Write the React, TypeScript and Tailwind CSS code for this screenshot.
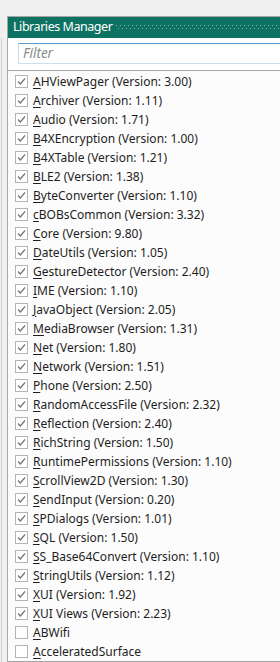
const libraries: { name: string; version?: string; checked: boolean }[] = [
  { name: "AHViewPager", version: "3.00", checked: true },
  { name: "Archiver", version: "1.11", checked: true },
  { name: "Audio", version: "1.71", checked: true },
  { name: "B4XEncryption", version: "1.00", checked: true },
  { name: "B4XTable", version: "1.21", checked: true },
  { name: "BLE2", version: "1.38", checked: true },
  { name: "ByteConverter", version: "1.10", checked: true },
  { name: "cBOBsCommon", version: "3.32", checked: true },
  { name: "Core", version: "9.80", checked: true },
  { name: "DateUtils", version: "1.05", checked: true },
  { name: "GestureDetector", version: "2.40", checked: true },
  { name: "IME", version: "1.10", checked: true },
  { name: "JavaObject", version: "2.05", checked: true },
  { name: "MediaBrowser", version: "1.31", checked: true },
  { name: "Net", version: "1.80", checked: true },
  { name: "Network", version: "1.51", checked: true },
  { name: "Phone", version: "2.50", checked: true },
  { name: "RandomAccessFile", version: "2.32", checked: true },
  { name: "Reflection", version: "2.40", checked: true },
  { name: "RichString", version: "1.50", checked: true },
  { name: "RuntimePermissions", version: "1.10", checked: true },
  { name: "ScrollView2D", version: "1.30", checked: true },
  { name: "SendInput", version: "0.20", checked: true },
  { name: "SPDialogs", version: "1.01", checked: true },
  { name: "SQL", version: "1.50", checked: true },
  { name: "SS_Base64Convert", version: "1.10", checked: true },
  { name: "StringUtils", version: "1.12", checked: true },
  { name: "XUI", version: "1.92", checked: true },
  { name: "XUI Views", version: "2.23", checked: true },
  { name: "ABWifi", checked: false },
  { name: "AcceleratedSurface", checked: false },
];

function CheckBox({ checked }: { checked: boolean }) {
  return (
    <span className="flex h-[13px] w-[13px] shrink-0 items-center justify-center border border-[#b4b4b4] bg-white">
      {checked && (
        <svg width="11" height="11" viewBox="0 0 11 11" aria-hidden="true">
          <polyline points="2,5.5 4.3,8 9,2.5" fill="none" stroke="#737373" strokeWidth="1.2" />
        </svg>
      )}
    </span>
  );
}

function Grip() {
  return (
    <svg className="ml-[4px] h-[6px] flex-1" aria-hidden="true">
      <defs>
        <pattern id="grip" width="4" height="6" patternUnits="userSpaceOnUse">
          <rect x="0" y="0" width="1" height="1" fill="#79b2a7" />
          <rect x="2" y="3" width="1" height="1" fill="#79b2a7" />
        </pattern>
      </defs>
      <rect width="100%" height="100%" fill="url(#grip)" />
    </svg>
  );
}

export default function App() {
  return (
    <div className="flex h-[662px] w-[280px] overflow-hidden bg-[#f0f0f0] font-['Noto_Sans',sans-serif]">
      <div className="w-[7px] shrink-0 pt-[38px]">
        <div className="ml-[1px] h-full w-px bg-[#d2d2d2]" />
      </div>

      <div className="mt-[16px] flex min-w-0 flex-1 flex-col border-l border-t border-b border-[#a6a6a6]">
        {/* Title bar */}
        <div className="flex h-[21px] shrink-0 items-center bg-[#0d7261] pl-[5px]">
          <span className="whitespace-nowrap text-[12.5px] tracking-[-0.45px] text-white">Libraries Manager</span>
          <Grip />
        </div>

        {/* Filter */}
        <div className="shrink-0 bg-white pb-[6px] pl-[10px] pt-[5px]">
          <div className="flex h-[21px] items-center border border-l-[#c5dbeb] border-t-[#5f9ed3] border-b-[#c7e0f1] border-r-0 pl-[4px]">
            <span className="text-[13.5px] italic text-[#8a8a8a]">Filter</span>
          </div>
        </div>

        {/* List */}
        <div className="flex-1 border-t border-[#a6a6a6] bg-[#fcfcfc] pt-[1px]">
          {libraries.map((lib) => (
            <div key={lib.name} className="flex h-[19px] items-center pl-[7px]">
              <CheckBox checked={lib.checked} />
              <span className="ml-[5px] whitespace-nowrap text-[12px] text-[#1e1e1e]">
                <span className="underline underline-offset-2">{lib.name[0]}</span>
                {lib.name.slice(1)}
                {lib.version && ` (Version: ${lib.version})`}
              </span>
            </div>
          ))}
        </div>
      </div>
    </div>
  );
}
